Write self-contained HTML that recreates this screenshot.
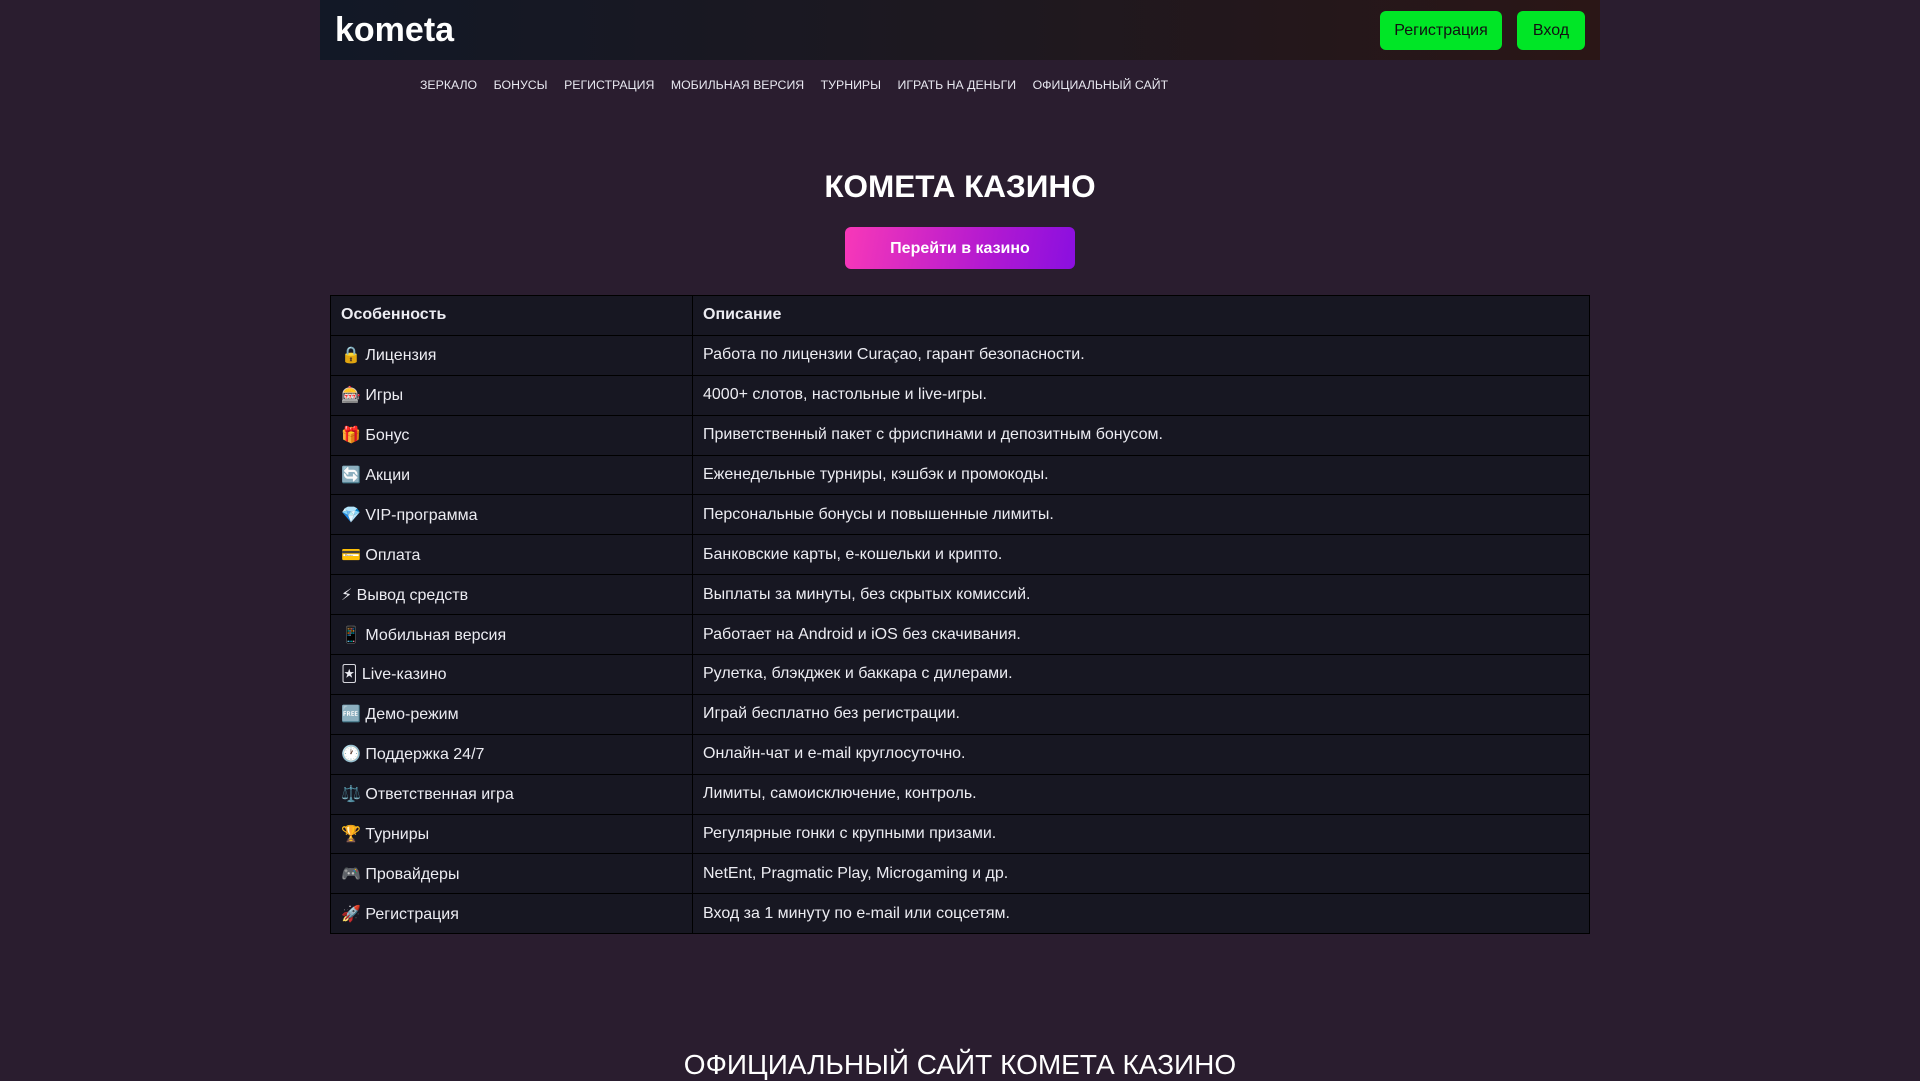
<!DOCTYPE html>
<html><head><meta charset="utf-8"><style>
*{box-sizing:border-box;margin:0;padding:0}
body{width:1920px;height:1080px;overflow:hidden;background:#2a1d2f;font-family:"Liberation Sans","DejaVu Sans",sans-serif;color:#fff}
.hdr{position:absolute;left:320px;top:0;width:1280px;height:60px;background:linear-gradient(90deg,#121826,#1d1820 50%,#2a1616)}
.logo{position:absolute;left:15px;top:11px;font-size:34px;font-weight:bold;color:#fff}
.btn{position:absolute;top:11px;height:39px;background:#00e626;border-radius:6px;color:#111;font-size:16px;line-height:39px;text-align:center}
.nav{position:absolute;left:420px;top:78px;font-size:12.3px;color:#e8e8f0;white-space:nowrap}
.nav span{margin-right:16.5px}
h1{position:absolute;left:0;width:1920px;top:168px;text-align:center;font-size:31.5px;font-weight:bold}
.go{position:absolute;left:845px;top:227px;width:230px;height:42px;border-radius:6px;background:linear-gradient(100deg,#f838b8,#b41ad0 60%,#8a0fe0);text-align:center;line-height:43px;font-weight:bold;font-size:16px}
table{position:absolute;left:330px;top:295px;width:1260px;border-collapse:collapse;background:#171722;font-size:16px;color:#ececf2}
td,th{border:1.5px solid #000;height:39.9px;padding:0 10px;text-align:left;vertical-align:middle}
th{font-weight:bold}
td:first-child,th:first-child{width:362px}
h2{position:absolute;left:0;width:1920px;top:1049px;text-align:center;font-size:28px;font-weight:normal}
</style></head><body>
<div class="hdr"><div class="logo">kometa</div>
<div class="btn" style="left:1060px;width:122px">Регистрация</div>
<div class="btn" style="left:1197px;width:68px">Вход</div></div>
<div class="nav"><span>ЗЕРКАЛО</span><span>БОНУСЫ</span><span>РЕГИСТРАЦИЯ</span><span>МОБИЛЬНАЯ ВЕРСИЯ</span><span>ТУРНИРЫ</span><span>ИГРАТЬ НА ДЕНЬГИ</span><span>ОФИЦИАЛЬНЫЙ САЙТ</span></div>
<h1>КОМЕТА КАЗИНО</h1>
<div class="go">Перейти в казино</div>
<table>
<tr><th>Особенность</th><th>Описание</th></tr>
<tr><td>🔒 Лицензия</td><td>Работа по лицензии Curaçao, гарант безопасности.</td></tr>
<tr><td>🎰 Игры</td><td>4000+ слотов, настольные и live-игры.</td></tr>
<tr><td>🎁 Бонус</td><td>Приветственный пакет с фриспинами и депозитным бонусом.</td></tr>
<tr><td>🔄 Акции</td><td>Еженедельные турниры, кэшбэк и промокоды.</td></tr>
<tr><td>💎 VIP-программа</td><td>Персональные бонусы и повышенные лимиты.</td></tr>
<tr><td>💳 Оплата</td><td>Банковские карты, е-кошельки и крипто.</td></tr>
<tr><td>⚡ Вывод средств</td><td>Выплаты за минуты, без скрытых комиссий.</td></tr>
<tr><td>📱 Мобильная версия</td><td>Работает на Android и iOS без скачивания.</td></tr>
<tr><td>🃏 Live-казино</td><td>Рулетка, блэкджек и баккара с дилерами.</td></tr>
<tr><td>🆓 Демо-режим</td><td>Играй бесплатно без регистрации.</td></tr>
<tr><td>🕐 Поддержка 24/7</td><td>Онлайн-чат и e-mail круглосуточно.</td></tr>
<tr><td>⚖️ Ответственная игра</td><td>Лимиты, самоисключение, контроль.</td></tr>
<tr><td>🏆 Турниры</td><td>Регулярные гонки с крупными призами.</td></tr>
<tr><td>🎮 Провайдеры</td><td>NetEnt, Pragmatic Play, Microgaming и др.</td></tr>
<tr><td>🚀 Регистрация</td><td>Вход за 1 минуту по e-mail или соцсетям.</td></tr>
</table>
<h2>ОФИЦИАЛЬНЫЙ САЙТ КОМЕТА КАЗИНО</h2>
</body></html>
